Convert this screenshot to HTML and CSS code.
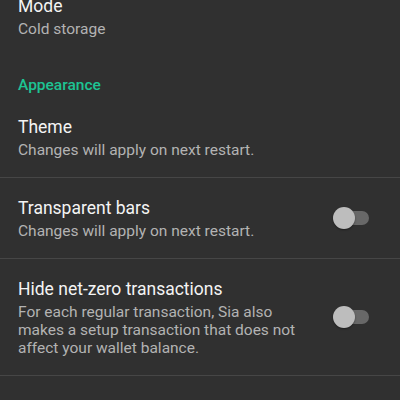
FILE: index.html
```html
<!DOCTYPE html>
<html lang="en">

<head>
  <meta charset="UTF-8">
  <title>Settings</title>
  <link rel="stylesheet" href="styles.css">
</head>

<body>

  <div class="prefs">
    <div class="pref">
      <div class="pref-text">
        <div class="pref-title">Mode</div>
        <div class="pref-summary">Cold storage</div>
      </div>
    </div>

    <div class="category">Appearance</div>

    <div class="pref">
      <div class="pref-text">
        <div class="pref-title">Theme</div>
        <div class="pref-summary">Changes will apply on next restart.</div>
      </div>
    </div>

    <div class="pref">
      <div class="pref-text">
        <div class="pref-title">Transparent bars</div>
        <div class="pref-summary">Changes will apply on next restart.</div>
      </div>
      <div class="switch"><span class="thumb"></span></div>
    </div>

    <div class="pref">
      <div class="pref-text">
        <div class="pref-title">Hide net-zero transactions</div>
        <div class="pref-summary">For each regular transaction, Sia also makes a setup transaction that does not
          affect your wallet balance.</div>
      </div>
      <div class="switch"><span class="thumb"></span></div>
    </div>
  </div>

</body>

</html>
```

FILE: styles.css
```css
body {
  margin: 0;
  background-color: #303030;
  font-family: Roboto, "Noto Sans", sans-serif;
  overflow: hidden;
}

.prefs {
  margin-top: -24px;
}

.pref {
  display: flex;
  align-items: center;
  padding: 18px 31px 18px 18px;
  border-bottom: 1px solid #464646;
}

.pref:first-child {
  border-bottom: none;
}

.pref-text {
  flex: 1;
}

.pref-title {
  font-size: 17.5px;
  line-height: 24px;
  color: #f4f4f4;
}

.pref-summary {
  margin-top: 2px;
  font-size: 15.5px;
  line-height: 18px;
  color: #b3b3b3;
  padding-right: 8px;
}

.category {
  padding: 19px 18px 2px;
  font-size: 15.5px;
  line-height: 20px;
  font-weight: 500;
  color: #1dc393;
}

.switch {
  position: relative;
  width: 35px;
  height: 14px;
  margin-left: 12px;
  border-radius: 7px;
  background-color: #686868;
}

.thumb {
  position: absolute;
  left: -1px;
  top: -4px;
  width: 22px;
  height: 22px;
  border-radius: 50%;
  background-color: #bdbdbd;
  box-shadow: 0 1px 2px rgba(0, 0, 0, 0.4);
}
```
